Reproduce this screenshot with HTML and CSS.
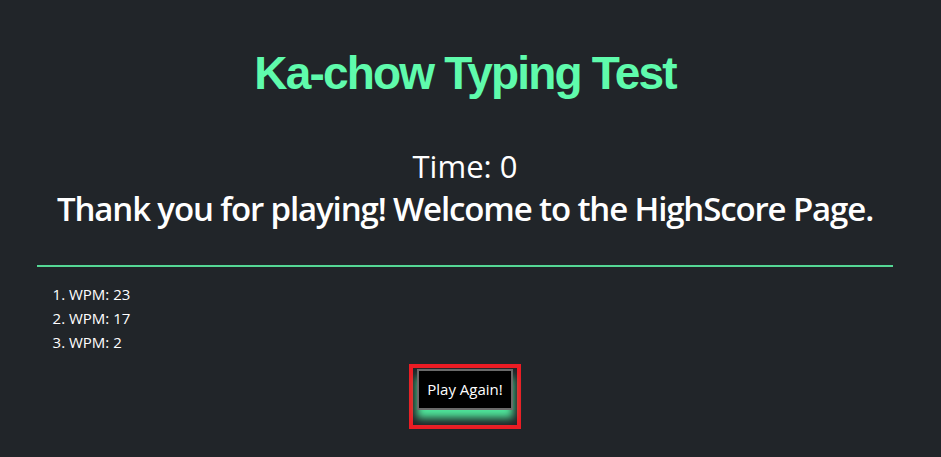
FILE: index.html
```html
<!DOCTYPE html>
<html lang="en">
<head>
<meta charset="utf-8">
<title>Ka-chow Typing Test</title>
<link rel="stylesheet" href="styles.css">
</head>
<body>
<div class="container">
  <h1 class="title">Ka-chow Typing Test</h1>
  <h2 class="time">Time: 0</h2>
  <h1 class="thanks">Thank you for playing! Welcome to the HighScore Page.</h1>
  <hr class="rule">
  <ol class="scores">
    <li>WPM: 23</li>
    <li>WPM: 17</li>
    <li>WPM: 2</li>
  </ol>
  <div class="actions">
    <div class="frame">
      <button class="play" type="button">Play Again!</button>
    </div>
  </div>
</div>
</body>
</html>
```
FILE: styles.css
```css
html, body {
  margin: 0;
  padding: 0;
  background: #212529;
}
body {
  color: #ffffff;
  font-family: "Open Sans", "Noto Sans", sans-serif;
  height: 457px;
  overflow: hidden;
}
.container {
  margin: 0 48px 0 37px;
  padding-top: 46px;
  text-align: center;
}
.title {
  margin: 0;
  font-family: "Liberation Sans", Arial, sans-serif;
  font-weight: 700;
  font-size: 46px;
  line-height: 55px;
  letter-spacing: -1.8px;
  color: #5ffbac;
}
.time {
  margin: 45px 0 0;
  font-weight: 400;
  font-size: 31px;
  line-height: 40px;
}
.thanks {
  margin: 0;
  font-weight: 600;
  font-size: 33px;
  line-height: 46px;
  letter-spacing: -1.13px;
  white-space: nowrap;
}
.rule {
  margin: 33px 0 0;
  border: 0;
  height: 2px;
  background: #55d895;
}
.scores {
  margin: 15px 0 0;
  padding-left: 32px;
  text-align: left;
  font-size: 15px;
  line-height: 24px;
}
.actions {
  margin-top: 10px;
  display: flex;
  justify-content: center;
}
.frame {
  border: 4px solid #ec1c24;
  padding: 1px 4px 15px;
}
.play {
  display: block;
  background: #000000;
  color: #ffffff;
  border: 2px solid #6a6a6a;
  font-family: "Open Sans", "Noto Sans", sans-serif;
  font-size: 15px;
  line-height: 20px;
  padding: 8px 8px 9px;
  box-shadow: 0 8px 8px #4fe59a;
  margin: 0;
}
```
